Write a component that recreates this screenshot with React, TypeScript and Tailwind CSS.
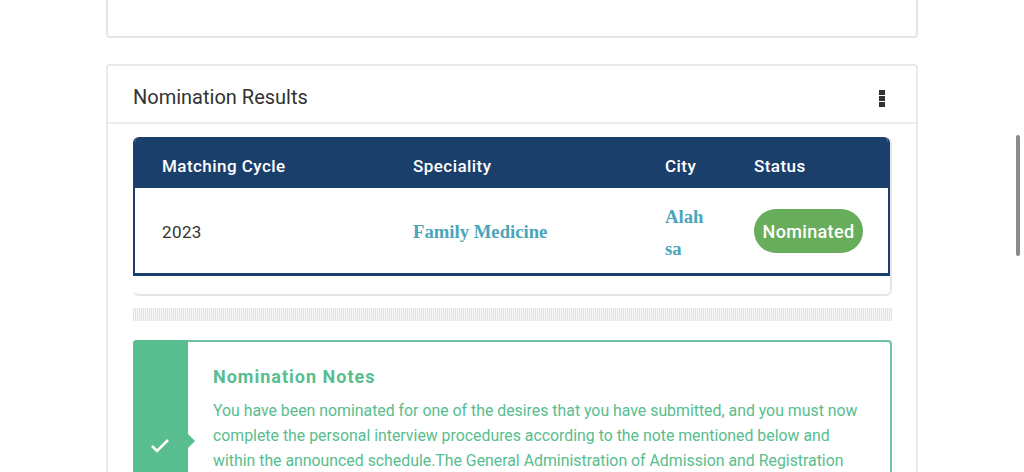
export default function App() {
  const din = { fontFamily: 'Roboto, "Liberation Sans", sans-serif' };
  const serif = { fontFamily: '"Liberation Serif", serif' };
  return (
    <div style={din} className="relative h-[472px] w-[1024px] overflow-hidden bg-white">
      <div className="ml-[106px] w-[812px]">
        <div className="h-[38px] rounded-b-[4px] border-x-2 border-b-2 border-[#e6e6e6] bg-white" />
        <div className="mt-[26px] h-[420px] rounded-t-[4px] border-x-2 border-t-2 border-[#e9e9e9] bg-white">
          <div className="flex h-[58px] items-center justify-between border-b-2 border-[#ececec] pl-[25px] pr-[31px]">
            <h2 className="pt-[5px] text-[20px] text-[#333333]">Nomination Results</h2>
            <div className="mt-[8px] flex flex-col gap-px">
              <span className="h-[5px] w-[6px] bg-[#333333]" />
              <span className="h-[5px] w-[6px] bg-[#333333]" />
              <span className="h-[5px] w-[6px] bg-[#333333]" />
            </div>
          </div>
          <div className="pl-[25px] pr-[24px] pt-[13px]">
            <div className="h-[159px] rounded-[6px] border-r-2 border-b-2 border-[#e6e6e6]">
              <div className="overflow-hidden rounded-t-[6px] border-x-2 border-b-[3px] border-[#1a3f6b]">
                <div className="flex h-[51px] items-center bg-[#1a3f6b] pt-[8px] text-[17px] font-medium tracking-[0.45px] text-white">
                  <div className="w-[278px] pl-[27px]">Matching Cycle</div>
                  <div className="w-[252px]">Speciality</div>
                  <div className="w-[89px]">City</div>
                  <div>Status</div>
                </div>
                <div className="flex h-[85px] items-center bg-white">
                  <div className="w-[278px] pl-[27px] pt-[5px] text-[17px] tracking-[0.4px] text-[#333333]">2023</div>
                  <div style={serif} className="w-[252px] pt-[4px] text-[18.7px] font-bold text-[#4ba5ba]">
                    Family Medicine
                  </div>
                  <div style={serif} className="w-[89px] pt-[4px] text-[18.7px] font-bold leading-[32px] text-[#4ba5ba]">
                    Alah<br />sa
                  </div>
                  <div className="flex h-[44px] w-[109px] items-center justify-center rounded-full bg-[#67ad5b] pt-[2px] text-[18px] font-medium tracking-[0.35px] text-white">
                    Nominated
                  </div>
                </div>
              </div>
            </div>
            <div className="mt-[12px] h-[13px] bg-[repeating-linear-gradient(90deg,#e2e2e2_0,#e2e2e2_1px,#f7f7f7_1px,#f7f7f7_2px)]" />
            <div className="mt-[19px] flex h-[200px] rounded-[4px] border-2 border-[#6fc3a0]">
              <div className="relative -ml-[2px] -mt-[2px] w-[55px] shrink-0 rounded-tl-[4px] bg-[#58bd8f]">
                <svg className="absolute left-[17px] top-[97px]" width="20" height="17" viewBox="0 0 20 17" fill="none" stroke="#ffffff" strokeWidth="2.6">
                  <path d="M2 9l5 5L18 3" />
                </svg>
                <span className="absolute right-[-5px] top-[96px] h-[10px] w-[10px] rotate-45 bg-[#58bd8f]" />
              </div>
              <div className="pl-[25px] pt-[24px]">
                <h3 className="text-[18px] font-bold leading-[22px] tracking-[1px] text-[#58bd8f]">Nomination Notes</h3>
                <p className="mt-[10px] w-[660px] text-[15.85px] leading-[25px] text-[#58bd8f]">
                  You have been nominated for one of the desires that you have submitted, and you must now complete the personal interview procedures according to the note mentioned below and within the announced schedule.The General Administration of Admission and Registration
                </p>
              </div>
            </div>
          </div>
        </div>
      </div>
      <div className="absolute left-[1016px] top-[135px] h-[121px] w-[4px] rounded-full bg-[#8a8a8a]" />
    </div>
  );
}
